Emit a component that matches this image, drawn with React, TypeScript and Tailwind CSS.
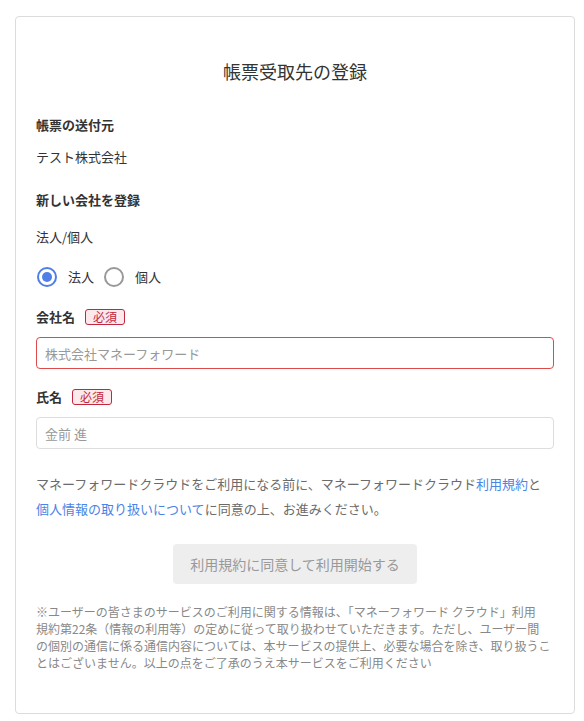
import { useState } from 'react';

const font = { fontFamily: '"Noto Sans CJK JP", "Noto Sans", sans-serif' };

function Badge() {
  return (
    <span className="ml-[10px] inline-flex h-[16px] items-center rounded-[3px] border border-[#c0283d] bg-[#fde9eb] px-[7px] text-[12px] leading-none text-[#c0283d]">
      必須
    </span>
  );
}

function Radio({ checked, label, onClick }: { checked: boolean; label: string; onClick: () => void }) {
  return (
    <button type="button" onClick={onClick} className="flex items-center">
      <span
        className={
          checked
            ? 'flex h-[20px] w-[20px] items-center justify-center rounded-full border-2 border-[#4f7fe6]'
            : 'flex h-[20px] w-[20px] items-center justify-center rounded-full border-2 border-[#999]'
        }
      >
        {checked && <span className="h-[10px] w-[10px] rounded-full bg-[#4f7fe6]" />}
      </span>
      <span className="ml-[11px] text-[13px] text-[#333]">{label}</span>
    </button>
  );
}

export default function App() {
  const [kind, setKind] = useState<'corp' | 'person'>('corp');
  const [company, setCompany] = useState('');
  const [name, setName] = useState('');

  return (
    <div className="bg-white pl-[15px] pt-4" style={font}>
      <div className="h-[698px] w-[560px] rounded border border-[#dcdcdc] bg-white px-5 pt-[41px]">
        <h1 className="text-center text-[18px] leading-[27px] text-[#333]">帳票受取先の登録</h1>

        <p className="mt-[30px] text-[13px] font-bold leading-5 text-[#333]">帳票の送付元</p>
        <p className="mt-3 text-[13px] leading-5 text-[#333]">テスト株式会社</p>

        <p className="mt-[23px] text-[13px] font-bold leading-5 text-[#333]">新しい会社を登録</p>
        <p className="mt-[17px] text-[13px] leading-5 text-[#333]">法人/個人</p>

        <div className="mt-5 flex h-5 items-center gap-[10px] pl-px">
          <Radio checked={kind === 'corp'} label="法人" onClick={() => setKind('corp')} />
          <Radio checked={kind === 'person'} label="個人" onClick={() => setKind('person')} />
        </div>

        <div className="mt-5 flex h-5 items-center">
          <span className="text-[13px] font-bold text-[#333]">会社名</span>
          <Badge />
        </div>
        <input
          value={company}
          onChange={(e) => setCompany(e.target.value)}
          placeholder="株式会社マネーフォワード"
          className="mt-[10px] h-[32px] w-full rounded border border-[#dc4a4a] px-[8px] text-[13px] text-[#333] outline-none placeholder:text-[#999]"
        />

        <div className="mt-[18px] flex h-5 items-center">
          <span className="text-[13px] font-bold text-[#333]">氏名</span>
          <Badge />
        </div>
        <input
          value={name}
          onChange={(e) => setName(e.target.value)}
          placeholder="金前 進"
          className="mt-[10px] h-[32px] w-full rounded border border-[#dddddd] px-[8px] text-[13px] text-[#333] outline-none placeholder:text-[#999]"
        />

        <p className="mt-[22px] text-[13px] leading-[25px] text-[#6b6b6b]">
          マネーフォワードクラウドをご利用になる前に、マネーフォワードクラウド
          <a href="#" className="text-[#4a84e6]">利用規約</a>と
          <a href="#" className="text-[#4a84e6]">個人情報の取り扱いについて</a>
          に同意の上、お進みください。
        </p>

        <div className="mt-[23px] flex justify-center">
          <button
            type="button"
            disabled
            className="h-[40px] w-[244px] rounded bg-[#eeeeee] text-[14px] text-[#999]"
          >
            利用規約に同意して利用開始する
          </button>
        </div>

        {/* line breaks pinned to match the original wrap */}
        <p className="mt-[19px] text-[12px] leading-[17px] text-[#888]">
          ※ユーザーの皆さまのサービスのご利用に関する情報は、「マネーフォワード クラウド」利用
          <br />
          規約第22条（情報の利用等）の定めに従って取り扱わせていただきます。ただし、ユーザー間
          <br />
          の個別の通信に係る通信内容については、本サービスの提供上、必要な場合を除き、取り扱うこ
          <br />
          とはございません。以上の点をご了承のうえ本サービスをご利用ください
        </p>
      </div>
    </div>
  );
}
